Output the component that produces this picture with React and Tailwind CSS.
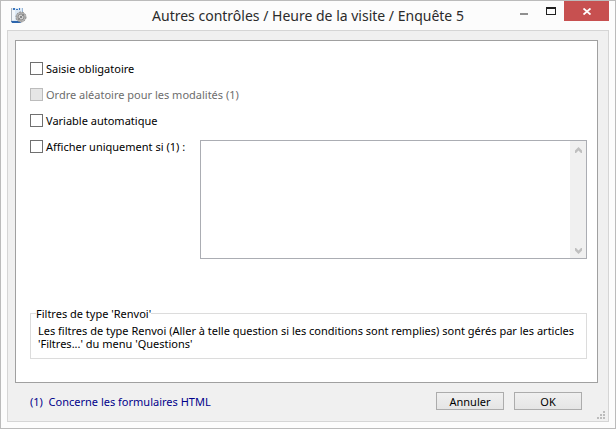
import React, { useState } from 'react';

function AppIcon() {
  return (
    <svg width="17" height="17" viewBox="0 0 17 17" className="shrink-0" aria-hidden="true">
      <path d="M2 1h10l1 1v12H2z" fill="#dce8f4" />
      <path d="M1 1h1v14H1z" fill="#aeb5bd" />
      <path d="M2 3h3v10H2z" fill="#f2f6fa" />
      <path d="M3 1h2v2H3zM6 2h2v1H6zM9 1h1v2H9z" fill="#3c76bd" />
      <path d="M12 1h1v4h-1z" fill="#9cb9da" />
      <path d="M1 14h9l1 2H2z" fill="#2d66ad" />
      <circle cx="11" cy="10" r="5" fill="#b4b4b4" />
      <circle cx="11" cy="10" r="5" fill="none" stroke="#8b8b8b" strokeWidth="1" strokeDasharray="2 1" />
      <circle cx="11" cy="10" r="3" fill="#cfcfcf" stroke="#8f8f8f" strokeWidth="1" />
      <path d="M8 13l2-2M12 9l2-2" stroke="#8a8a8a" strokeWidth="1" />
      <circle cx="11" cy="10" r="1" fill="#6c6e70" />
    </svg>
  );
}

function TitleBar({ title }) {
  return (
    <header className="flex h-[29px] items-start">
      <div className="flex w-[105px] pt-[6px] pl-[9px]">
        <AppIcon />
      </div>
      <h1 className="flex-1 text-center font-['Noto_Sans',sans-serif] text-[14px] leading-[29px] whitespace-nowrap text-[#2b2b2b]">
        {title}
      </h1>
      <div className="flex w-[105px] justify-end pr-[6px]">
        <button type="button" aria-label="Réduire" className="flex h-5 w-[27px] items-start justify-center pt-3">
          <svg width="8" height="2" viewBox="0 0 8 2"><path d="M0 0h8v2H0z" fill="#8f8f8f" /></svg>
        </button>
        <button type="button" aria-label="Agrandir" className="flex h-5 w-[27px] items-center justify-center">
          <svg width="10" height="8" viewBox="0 0 10 8"><path d="M0 0h10v8H0zM1 2v5h8V2z" fill="#1f1f1f" fillRule="evenodd" /></svg>
        </button>
        <button type="button" aria-label="Fermer" className="flex h-5 w-[45px] items-center justify-center bg-[#c75050]">
          <svg width="8" height="7" viewBox="0 0 8 7"><path d="M0.5 0.5l7 6M7.5 0.5l-7 6" stroke="#fff" strokeWidth="1.8" /></svg>
        </button>
      </div>
    </header>
  );
}

function CheckRow({ id, label, checked, onChange, disabled }) {
  return (
    <div className="flex h-[26px] items-center gap-[3px]">
      <input
        id={id}
        type="checkbox"
        checked={checked}
        onChange={onChange}
        disabled={disabled}
        className="size-[13px] shrink-0 appearance-none border border-[#707070] bg-white checked:bg-[#707070] disabled:border-[#bcbcbc] disabled:bg-[#e6e6e6]"
      />
      <label htmlFor={id} className={disabled ? 'text-[#6d6d6d]' : 'text-black'}>{label}</label>
    </div>
  );
}

export default function App() {
  const [options, setOptions] = useState({ required: false, auto: false, showIf: false });
  const [condition, setCondition] = useState('');

  const toggle = (name) => () => setOptions({ ...options, [name]: !options[name] });

  return (
    <div className="flex min-h-screen flex-col border border-[#bbbbbb] bg-[#fcfcfc] font-['Noto_Sans',sans-serif] text-[11px] leading-[13px] text-black">
      <TitleBar title="Autres contrôles / Heure de la visite / Enquête 5" />

      <form className="relative mx-[6px] mb-[6px] flex flex-1 flex-col border border-[#d5d5d5] bg-[#f0f0f0] pt-[9px] pr-[10px] pl-[7px]" onSubmit={(e) => e.preventDefault()}>
        <div className="flex-1 border border-[#a0a0a0] bg-white pt-[14px] pr-[10px] pb-[14px] pl-[14px]">
          <CheckRow id="required" label="Saisie obligatoire" checked={options.required} onChange={toggle('required')} />
          <CheckRow id="random" label="Ordre aléatoire pour les modalités (1)" checked={false} disabled />
          <CheckRow id="auto" label="Variable automatique" checked={options.auto} onChange={toggle('auto')} />
          <div className="flex items-start">
            <div className="w-[170px]">
              <CheckRow id="showIf" label="Afficher uniquement si (1) :" checked={options.showIf} onChange={toggle('showIf')} />
            </div>
            <div className="mt-[7px] flex h-[119px] flex-1 border border-[#abadb3]">
              <textarea
                aria-label="Condition d'affichage"
                value={condition}
                onChange={(e) => setCondition(e.target.value)}
                className="min-w-0 flex-1 resize-none bg-white p-1 outline-none"
              />
              <div className="flex w-4 flex-col items-center justify-between bg-[#f0f0f0] pt-[6px] pb-1" aria-hidden="true">
                <svg width="7" height="6" viewBox="0 0 7 6"><path d="M0 3.5L3.5 0L7 3.5V6H6L3.5 3.5L1 6H0z" fill="#bfbfbf" /></svg>
                <svg width="7" height="6" viewBox="0 0 7 6"><path d="M0 0H1L3.5 2.5L6 0H7V2.5L3.5 6L0 2.5z" fill="#bfbfbf" /></svg>
              </div>
            </div>
          </div>

          <fieldset className="mt-[48px] border border-[#dcdcdc] px-[7px] pt-[4px] pb-[8px]">
            <legend className="-ml-[2px] h-[13px]">Filtres de type 'Renvoi'</legend>
            <p>
              Les filtres de type Renvoi (Aller à telle question si les conditions sont remplies) sont gérés par les articles 'Filtres...' du menu 'Questions'
            </p>
          </fieldset>
        </div>

        <footer className="flex items-center justify-between pt-[9px] pr-4 pb-[11px] pl-[15px]">
          <p className="whitespace-pre text-[#00008b]">(1)  Concerne les formulaires HTML</p>
          <div className="flex gap-[10px]">
            <button type="button" className="h-[18px] w-[68px] border border-[#acacac] bg-linear-to-b from-[#f0f0f0] to-[#e5e5e5]">Annuler</button>
            <button type="submit" className="h-[18px] w-[68px] border border-[#acacac] bg-linear-to-b from-[#f0f0f0] to-[#e5e5e5]">OK</button>
          </div>
        </footer>
        <svg className="absolute right-[3px] bottom-[2px]" width="8" height="8" viewBox="0 0 8 8" aria-hidden="true">
          <path d="M6 0h2v2H6zM3 3h2v2H3zM6 3h2v2H6zM0 6h2v2H0zM3 6h2v2H3zM6 6h2v2H6z" fill="#bcbcbc" />
        </svg>
      </form>
    </div>
  );
}
